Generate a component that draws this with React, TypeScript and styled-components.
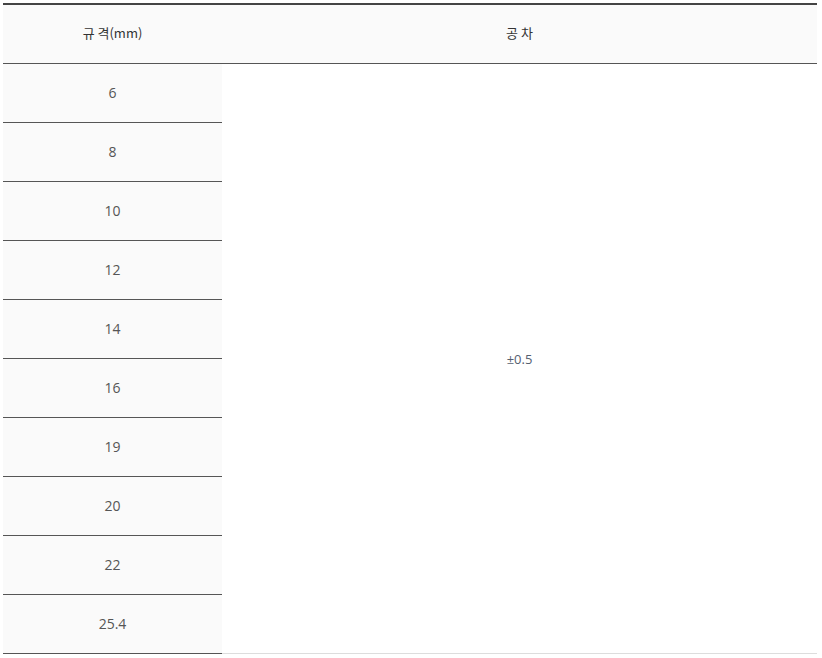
import React from "react";
import styled, { createGlobalStyle } from "styled-components";

const Global = createGlobalStyle`
  html, body { margin: 0; padding: 0; background: #fff; }
  body { font-family: "Open Sans", "Noto Sans CJK KR", sans-serif; }
`;

const Wrap = styled.div`
  padding: 3px 5px 0 3px;
`;

const Table = styled.table`
  width: 814px;
  border-collapse: collapse;
  border-top: 2px solid #444;
  table-layout: fixed;
`;

const HeadCell = styled.th<{ $w?: number }>`
  width: ${(p) => (p.$w ? `${p.$w}px` : "auto")};
  height: 55px;
  padding: 0 0 3px;
  background: #fafafa;
  border-bottom: 1px solid #555;
  font-weight: 400;
  font-size: 13px;
  color: #333;
  text-align: center;
  vertical-align: middle;
  font-family: "Noto Sans CJK KR", "Open Sans", sans-serif;
`;

const SizeCell = styled.td`
  height: 56px;
  padding: 0 0 2px;
  background: #fafafa;
  border-bottom: 1px solid #555;
  font-size: 14px;
  color: #555;
  text-align: center;
  vertical-align: middle;
`;

const TolCell = styled.td`
  padding: 0;
  background: #fff;
  border-bottom: 1px solid #ddd;
  font-size: 13px;
  color: #556070;
  text-align: center;
  vertical-align: middle;
`;

const sizes = ["6", "8", "10", "12", "14", "16", "19", "20", "22", "25.4"];

export default function App() {
  return (
    <Wrap>
      <Global />
      <Table>
        <thead>
          <tr>
            <HeadCell $w={219}>규 격(mm)</HeadCell>
            <HeadCell>공 차</HeadCell>
          </tr>
        </thead>
        <tbody>
          {sizes.map((s, i) => (
            <tr key={s}>
              <SizeCell>{s}</SizeCell>
              {i === 0 && <TolCell rowSpan={sizes.length}>±0.5</TolCell>}
            </tr>
          ))}
        </tbody>
      </Table>
    </Wrap>
  );
}
